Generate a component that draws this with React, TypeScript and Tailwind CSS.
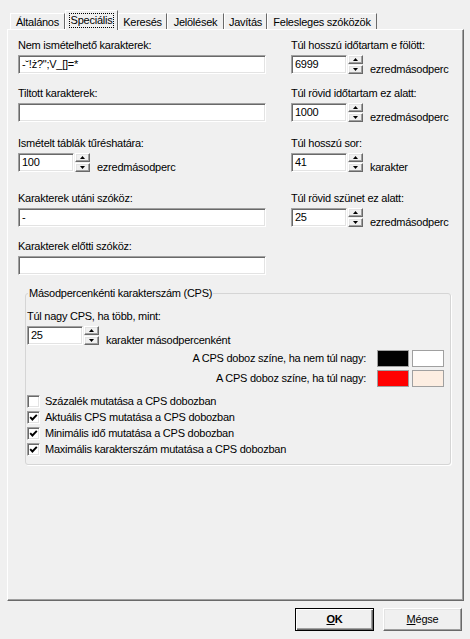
import React from 'react';

const sunken =
  'border border-t-[#a0a0a0] border-l-[#a0a0a0] border-b-white border-r-white shadow-[inset_1px_1px_0_#696969,inset_-1px_-1px_0_#e3e3e3] bg-white';
const raised =
  'border border-t-white border-l-white border-b-[#696969] border-r-[#696969] shadow-[inset_-1px_-1px_0_#a0a0a0,inset_1px_1px_0_#e3e3e3] bg-[#f0f0f0]';

const tabs = [
  { label: 'Általános', w: 'w-[55px]' },
  { label: 'Speciális', w: 'w-[53px]', active: true },
  { label: 'Keresés', w: 'w-[49px]' },
  { label: 'Jelölések', w: 'w-[57px]' },
  { label: 'Javítás', w: 'w-[43px]' },
  { label: 'Felesleges szóközök', w: 'w-[110px]' },
];

const Arrow = ({ up }: { up?: boolean }) => (
  <svg width="5" height="3" viewBox="0 0 5 3">
    <path d={up ? 'M0 3 L2.5 0 L5 3 Z' : 'M0 0 L5 0 L2.5 3 Z'} fill="#000" />
  </svg>
);

const TextBox = ({ value = '' }: { value?: string }) => (
  <div className={`${sunken} h-[19px] w-[248px] pl-[3px] leading-[17px] whitespace-pre`}>{value}</div>
);

const Spin = ({ value, unit }: { value: string; unit: string }) => (
  <div className="flex items-end">
    <div className={`${sunken} h-[19px] w-[56px] pl-[3px] leading-[17px]`}>{value}</div>
    <div className="ml-[1px] flex h-[19px] w-[15px] flex-col gap-[1px]">
      <div className={`${raised} flex h-[9px] items-center justify-center`}>
        <Arrow up />
      </div>
      <div className={`${raised} flex h-[9px] items-center justify-center`}>
        <Arrow />
      </div>
    </div>
    <span className="mb-[-2px] ml-[7px] leading-[13px]">{unit}</span>
  </div>
);

const Label = ({ children }: { children: React.ReactNode }) => (
  <div className="mb-[3px] h-[14px] leading-[14px]">{children}</div>
);

const Check = ({ checked, label }: { checked?: boolean; label: string }) => (
  <div className="flex h-[16px] items-center">
    <div className={`${sunken} flex h-[13px] w-[13px] items-center justify-center`}>
      {checked && (
        <svg width="9" height="9" viewBox="0 0 9 9">
          <path d="M1.2 4.2 L3.4 6.5 L7.8 1.8" fill="none" stroke="#000" strokeWidth="1.9" />
        </svg>
      )}
    </div>
    <span className="ml-[5px] leading-[14px]">{label}</span>
  </div>
);

const Swatch = ({ color }: { color: string }) => (
  <div className={`h-[17px] w-[32px] border border-[#a0a0a0] ${color}`} />
);

export default function App() {
  return (
    <div className="h-[639px] w-[470px] bg-[#f0f0f0] font-['Liberation_Sans',Arial,sans-serif] text-[11px] tracking-[-0.25px] text-black">
      {/* tab row */}
      <div className="flex h-[29px] items-end pl-[10px]">
        {tabs.map(t =>
          t.active ? (
            <div
              key={t.label}
              className={`relative z-10 mb-[-1px] flex h-[20px] ${t.w} items-start justify-center border-t border-l border-r border-t-white border-l-white border-r-[#696969] bg-[#f0f0f0] pt-[2px]`}
            >
              <span className="border border-dotted border-black px-[1px] leading-[13px]">{t.label}</span>
            </div>
          ) : (
            <div
              key={t.label}
              className={`flex h-[16px] ${t.w} items-start justify-center border-t border-l border-r border-t-white border-l-white border-r-[#696969] pt-[1px] leading-[14px]`}
            >
              {t.label}
            </div>
          )
        )}
      </div>

      {/* panel */}
      <div className="ml-[7px] h-[572px] w-[457px] border border-t-white border-l-white border-r-[#696969] border-b-[#696969] pl-[10px] pt-[8px] shadow-[inset_-1px_-1px_0_#a0a0a0]">
        <div className="grid grid-cols-[248px_160px] gap-x-[25px]">
          <div>
            <Label>Nem ismételhető karakterek:</Label>
            <TextBox value={'-˘!ż?";V_[]=*'} />
          </div>
          <div>
            <Label>Túl hosszú időtartam e fölött:</Label>
            <Spin value="6999" unit="ezredmásodperc" />
          </div>

          <div className="mt-[12px]">
            <Label>Tiltott karakterek:</Label>
            <TextBox />
          </div>
          <div className="mt-[12px]">
            <Label>Túl rövid időtartam ez alatt:</Label>
            <Spin value="1000" unit="ezredmásodperc" />
          </div>

          <div className="mt-[14px]">
            <Label>Ismételt táblák tűréshatára:</Label>
            <Spin value="100" unit="ezredmásodperc" />
          </div>
          <div className="mt-[14px]">
            <Label>Túl hosszú sor:</Label>
            <Spin value="41" unit="karakter" />
          </div>

          <div className="mt-[19px]">
            <Label>Karakterek utáni szóköz:</Label>
            <TextBox value="-" />
          </div>
          <div className="mt-[19px]">
            <Label>Túl rövid szünet ez alatt:</Label>
            <Spin value="25" unit="ezredmásodperc" />
          </div>

          <div className="col-span-2 mt-[12px]">
            <Label>Karakterek előtti szóköz:</Label>
            <TextBox />
          </div>
        </div>

        {/* CPS group */}
        <fieldset className="ml-[7px] mt-[12px] w-[426px] rounded-[3px] border border-[#d5d5d5] pb-[7px] pl-[1px] pr-[6px] shadow-[1px_1px_0_#fff]">
          <legend className="ml-[1px] px-[1px] leading-[13px]">Másodpercenkénti karakterszám (CPS)</legend>
          <div className="mt-[9px]">
            <Label>Túl nagy CPS, ha több, mint:</Label>
            <Spin value="25" unit="karakter másodpercenként" />
          </div>
          <div className="mt-[5px] flex flex-col gap-[3px]">
            <div className="flex h-[17px] items-center justify-end">
              <span className="mr-[11px]">A CPS doboz színe, ha nem túl nagy:</span>
              <Swatch color="bg-black" />
              <div className="w-[3px]" />
              <Swatch color="bg-white" />
            </div>
            <div className="flex h-[17px] items-center justify-end">
              <span className="mr-[11px]">A CPS doboz színe, ha túl nagy:</span>
              <Swatch color="bg-[#ff0000]" />
              <div className="w-[3px]" />
              <Swatch color="bg-[#fdeee2]" />
            </div>
          </div>
          <div className="mt-[6px]">
            <Check label="Százalék mutatása a CPS dobozban" />
            <Check checked label="Aktuális CPS mutatása a CPS dobozban" />
            <Check checked label="Minimális idő mutatása a CPS dobozban" />
            <Check checked label="Maximális karakterszám mutatása a CPS dobozban" />
          </div>
        </fieldset>
      </div>

      {/* buttons */}
      <div className="mt-[7px] flex justify-end gap-[9px] pr-[8px]">
        <button className="h-[23px] w-[79px] border border-black bg-[#f0f0f0] shadow-[inset_1px_1px_0_#fff,inset_-1px_-1px_0_#696969,inset_-2px_-2px_0_#a0a0a0] font-bold">
          <span className="underline">O</span>K
        </button>
        <button className={`${raised} h-[23px] w-[79px]`}>
          <span className="underline">M</span>égse
        </button>
      </div>
    </div>
  );
}
